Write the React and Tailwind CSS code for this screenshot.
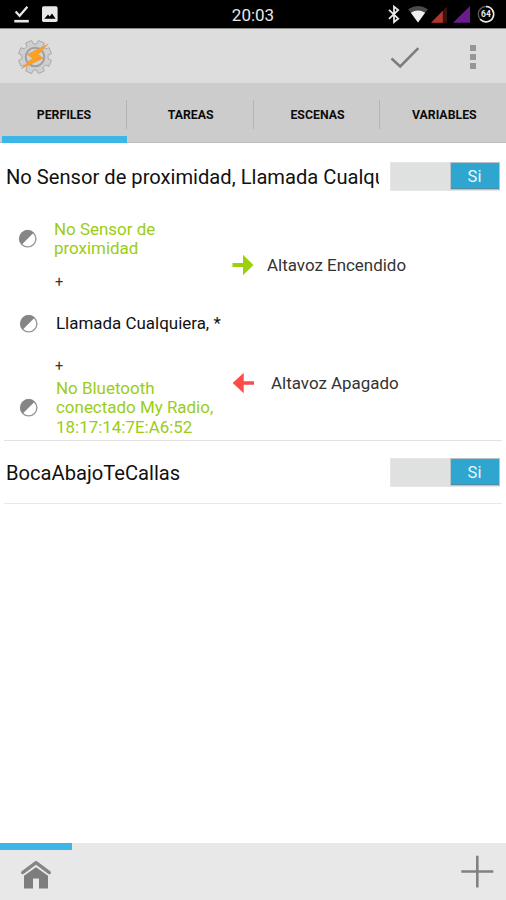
import React, { useState } from "react";

const tabs = ["PERFILES", "TAREAS", "ESCENAS", "VARIABLES"];

const gearPath = () => {
  const points = [];
  for (let i = 0; i < 8; i++) {
    const center = 22.5 + i * 45;
    [
      [-15, 13.2],
      [-11, 16.8],
      [11, 16.8],
      [15, 13.2],
    ].forEach(([offset, r]) => {
      const a = ((center + offset) * Math.PI) / 180;
      points.push(
        `${(18 + r * Math.cos(a)).toFixed(2)},${(18 + r * Math.sin(a)).toFixed(2)}`,
      );
    });
  }
  return points.join(" ");
};

const TaskerLogo = () => (
  <svg className="mt-0.5" width="36" height="36" viewBox="0 0 36 36">
    <polygon
      points={gearPath()}
      fill="#cfcfcf"
      stroke="#a8a8a8"
      strokeWidth="1"
      strokeLinejoin="round"
    />
    <circle cx="18" cy="18" r="9.3" fill="#d2d2d2" stroke="#a0a0a0" strokeWidth="2" />
    <path
      d="M31.2 5 L10.3 15.4 L15.8 19.6 L12.6 21.4 L4.4 29.6 L26.4 19.2 L21.3 15.6 L23.6 13 Z"
      fill="#ffa01e"
      stroke="#cf9464"
      strokeWidth="0.5"
    />
  </svg>
);

const StatusBar = () => (
  <div className="flex h-7 items-center bg-black">
    <svg width="60" height="28" viewBox="0 0 60 28" fill="none">
      <path d="M15.6 11.6 L19.6 15.8 L27.4 6.8" stroke="#e8e8e8" strokeWidth="2.2" />
      <path d="M14.3 21.2 H28.8" stroke="#e8e8e8" strokeWidth="2.6" />
      <rect x="42" y="6.3" width="15.6" height="15.6" rx="1.6" fill="#e8e8e8" />
      <path d="M44.3 18.8 L48 14.6 L49.7 16.6 L52 13.4 L55.6 18.8 Z" fill="#000" />
    </svg>
    <div className="flex-1 pt-px text-center text-[17px] leading-6 text-[#e8e8e8]">
      20:03
    </div>
    <svg className="-ml-[64px]" width="124" height="28" viewBox="382 0 124 28" fill="none">
      <path
        d="M389 9.8 L398.2 18.6 L394 22 V6.6 L398.2 10 L389 18.8"
        stroke="#e8e8e8"
        strokeWidth="1.8"
      />
      <path d="M408.2 9.2 Q418 2.8 427.8 9.2 L418 22.6 Z" fill="#4a4a4a" />
      <path d="M410.9 12.8 Q418 8.4 425.1 12.8 L418 22.6 Z" fill="#f0f0f0" />
      <path d="M431 22.8 L447 6.5 V22.8 Z" fill="#381410" />
      <path d="M431 22.8 L442.8 10.8 V22.8 Z" fill="#b43429" />
      <path d="M453 22.8 L470 6 V22.8 Z" fill="#6a1b8c" />
      <circle cx="486" cy="14.2" r="7.7" stroke="#5a5a5a" strokeWidth="1.4" />
      <path d="M486 6.5 A7.7 7.7 0 1 1 480.2 19.3" stroke="#e8e8e8" strokeWidth="1.6" />
      <text
        x="486"
        y="17.3"
        textAnchor="middle"
        fontSize="8.5"
        fontWeight="700"
        fill="#e8e8e8"
      >
        64
      </text>
    </svg>
  </div>
);

const HalfCircle = () => (
  <svg className="shrink-0" width="20" height="20" viewBox="0 0 20 20">
    <circle cx="9.7" cy="9.7" r="8.2" fill="#fff" stroke="#979797" strokeWidth="1.4" />
    <path d="M3.8 15.6 A8.3 8.3 0 0 1 15.6 3.8 Z" fill="#858585" />
  </svg>
);

const Switch = ({ on, onToggle }) => (
  <button
    type="button"
    onClick={onToggle}
    className={`flex h-[29px] w-[110px] shrink-0 border border-[#e6e6e6] bg-[#dfe0e0] ${
      on ? "justify-end" : "justify-start"
    }`}
  >
    <span className="flex h-[26px] w-12 items-center justify-center border-b border-[#4f8ca3] bg-[#2ea6d0] pr-px pt-[5px] text-[16.5px] text-[#f0f6f8] outline outline-[#b9c4c8]">
      {on ? "Si" : "No"}
    </span>
  </button>
);

const ProfileHeader = ({ name, on, onToggle, className }) => (
  <div className={`flex items-center pl-1.5 pr-1.5 ${className}`}>
    <div className="mr-[11px] flex-1 overflow-hidden whitespace-nowrap pt-0.5 text-[20.15px] leading-7 text-[#111]">
      {name}
    </div>
    <Switch on={on} onToggle={onToggle} />
  </div>
);

const Plus = ({ className }) => (
  <div className={`pl-[55px] text-[14.5px] leading-5 text-[#333] ${className}`}>+</div>
);

const App = () => {
  const [active, setActive] = useState(0);
  const [enabled, setEnabled] = useState([true, true]);

  const toggle = (index) => {
    setEnabled(enabled.map((value, i) => (i === index ? !value : value)));
  };

  return (
    <div className="flex h-[900px] w-[506px] flex-col overflow-hidden bg-white font-['Roboto',sans-serif]">
      <StatusBar />

      {/* Action bar */}
      <div className="flex h-[55px] items-center border-t border-[#8a8a8a] bg-[#dddddd] pl-[16.5px]">
        <TaskerLogo />
        <svg className="ml-auto mt-0.5" width="32" height="26" viewBox="0 0 32 26" fill="none">
          <path d="M2.5 14.5 L11.2 22.5 L29.3 4.2" stroke="#7c7c7c" strokeWidth="2.5" />
        </svg>
        <svg className="ml-[48px] mr-[29.5px] mt-0.5" width="8" height="26" viewBox="0 0 8 26" fill="#969696">
          <rect x="1" y="1" width="6" height="6" />
          <rect x="1" y="10" width="6" height="6" />
          <rect x="1" y="19" width="6" height="6" />
        </svg>
      </div>

      {/* Tabs */}
      <div className="flex h-[60px] border-b border-[#bcbcbc] bg-[#cccccc]">
        {tabs.map((tab, index) => (
          <button
            key={tab}
            type="button"
            onClick={() => setActive(index)}
            className="flex h-[60px] w-[126.8px] shrink-0 flex-col"
          >
            <span className="flex h-[53px] w-full items-center pt-[10px]">
              <span className="w-full pl-0.5 pt-0.5 text-center text-[12.3px] font-bold text-[#0c0c0c]">
                {tab}
              </span>
              <span
                className={`-mt-[1px] h-[29px] w-px shrink-0 ${
                  index < tabs.length - 1 ? "bg-[#b4b4b4]" : ""
                }`}
              />
            </span>
            {active === index && (
              <span className="ml-0.5 h-[7px] w-[125px] bg-[#3cb6e6]" />
            )}
          </button>
        ))}
      </div>

      <div className="flex-1">
        <ProfileHeader
          className="h-[66px]"
          name="No Sensor de proximidad, Llamada Cualquiera"
          on={enabled[0]}
          onToggle={() => toggle(0)}
        />

        {/* Contexts and linked tasks */}
        <div className="mx-1 flex h-[232px] border-b border-[#e2e2e2] text-[16.95px]">
          <div className="-ml-1 w-[231px] shrink-0 whitespace-nowrap leading-[19.5px] text-[#9acd14]">
            <div className="mt-[10.5px] flex items-center">
              <div className="ml-[18px] mr-4">
                <HalfCircle />
              </div>
              <p>
                No Sensor de
                <br />
                proximidad
              </p>
            </div>
            <Plus className="mt-[14px]" />
            <div className="mt-[21px] flex items-center text-[#111]">
              <div className="ml-[19px] mr-[17px]">
                <HalfCircle />
              </div>
              <p>Llamada Cualquiera, *</p>
            </div>
            <Plus className="mt-[23px]" />
            <div className="mt-[2px] flex items-center">
              <div className="ml-[19px] mr-[17px]">
                <HalfCircle />
              </div>
              <p>
                No Bluetooth
                <br />
                conectado My Radio,
                <br />
                18:17:14:7E:A6:52
              </p>
            </div>
          </div>

          <div className="pt-[44px] text-[#333]">
            <div className="flex h-6 items-center">
              <svg width="24" height="22" viewBox="0 0 24 22" fill="#9ccf0c">
                <path d="M1.5 9 H12 V0.8 L22.5 11 L12 21.2 V13 H1.5 Z" />
              </svg>
              <span className="ml-3 pt-px">Altavoz Encendido</span>
            </div>
            <div className="mt-[94px] flex h-6 items-center">
              <svg width="24" height="22" viewBox="0 0 24 22" fill="#ff4b48">
                <path d="M1.7 11 L12.7 0.8 V9.2 H23 V12.8 H12.7 V21.2 Z" />
              </svg>
              <span className="ml-4 pt-px">Altavoz Apagado</span>
            </div>
          </div>
        </div>

        <div className="mx-1 border-b border-[#e8e8e4]">
          <ProfileHeader
            className="-mx-1 h-[62px]"
            name="BocaAbajoTeCallas"
            on={enabled[1]}
            onToggle={() => toggle(1)}
          />
        </div>
      </div>

      {/* Bottom bar */}
      <div className="h-[57px] bg-[#e8e8e8]">
        <div className="h-[7px] w-[72px] bg-[#3cb6e6]" />
        <div className="flex items-center justify-between pl-5 pr-3 pt-[5px]">
          <svg width="32" height="34" viewBox="0 0 32 34" fill="none">
            <path
              d="M2.6 17.6 L16 7.6 L29.4 17.6"
              stroke="#858585"
              strokeWidth="3.2"
              strokeLinecap="round"
              strokeLinejoin="round"
            />
            <path
              d="M4 20.8 L16 12.2 L28 20.8 V33.6 H19 V23.5 H13 V33.6 H4 Z"
              fill="#7d7d7d"
            />
          </svg>
          <svg width="34" height="34" viewBox="0 0 34 34">
            <path d="M17.3 0.8 V32.6 M1.3 16.5 H33.3" stroke="#818181" strokeWidth="2.6" />
          </svg>
        </div>
      </div>
    </div>
  );
};

export default App;
